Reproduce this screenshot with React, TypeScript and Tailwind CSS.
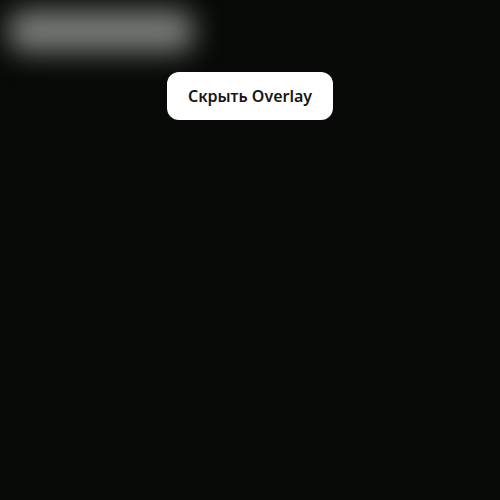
import React from 'react';

export default function App() {
  return (
    <div className="relative w-[500px] h-[500px] bg-[#080a08] overflow-hidden" style={{ fontFamily: '"Noto Sans", sans-serif' }}>
      {/* blurred preview behind */}
      <div className="absolute left-[8px] top-[10px] w-[186px] h-[42px] rounded-2xl bg-[#7a7c78] blur-[14px]" />

      <div className="flex justify-center pt-[72px]">
        <button className="relative h-[48px] px-[21px] rounded-[12px] bg-white text-[#161616] text-[16px] font-semibold">
          Скрыть Overlay
        </button>
      </div>
    </div>
  );
}
